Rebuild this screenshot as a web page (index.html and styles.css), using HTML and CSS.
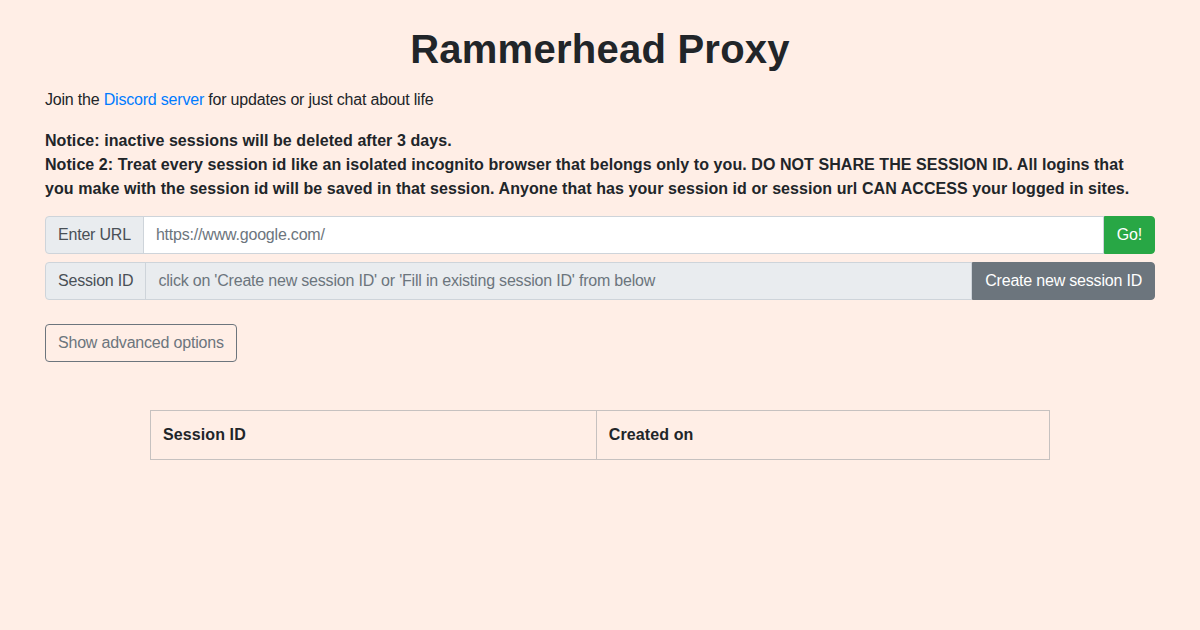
FILE: index.html
```html
<!DOCTYPE html>
<html lang="en">
<head>
<meta charset="utf-8">
<title>Rammerhead Proxy</title>
<link rel="stylesheet" href="styles.css">
</head>
<body>
<div class="container">
  <h1 class="title">Rammerhead Proxy</h1>
  <p class="join">Join the <a href="#">Discord server</a> for updates or just chat about life</p>
  <p class="notice">Notice: inactive sessions will be deleted after 3 days.<br>Notice 2: Treat every session id like an isolated incognito browser that belongs only to you. DO NOT SHARE THE SESSION ID. All logins that you make with the session id will be saved in that session. Anyone that has your session id or session url CAN ACCESS your logged in sites.</p>
  <div class="input-group">
    <span class="addon">Enter URL</span>
    <input class="field" type="text" placeholder="https://www.google.com/">
    <button class="btn btn-go">Go!</button>
  </div>
  <div class="input-group">
    <span class="addon">Session ID</span>
    <input class="field field-disabled" type="text" placeholder="click on 'Create new session ID' or 'Fill in existing session ID' from below" disabled>
    <button class="btn btn-gray">Create new session ID</button>
  </div>
  <div class="adv-row">
    <button class="btn btn-outline">Show advanced options</button>
  </div>
  <table class="sessions">
    <thead>
      <tr><th>Session ID</th><th>Created on</th></tr>
    </thead>
  </table>
</div>
</body>
</html>
```

FILE: styles.css
```css
* { box-sizing: border-box; }
html, body { margin: 0; padding: 0; }
body {
  background: #ffeee6;
  color: #212529;
  font-family: "Liberation Sans", Arial, sans-serif;
  font-size: 16px;
  line-height: 1.5;
  letter-spacing: -0.2px;
}
.container {
  width: 1140px;
  margin: 0 auto;
  padding: 25px 15px 0;
}
.title {
  margin: 0 0 15px;
  font-size: 40px;
  font-weight: 700;
  line-height: 1.2;
  text-align: center;
  letter-spacing: 0.25px;
}
.join { margin: 0 0 17px; }
.join a { color: #007bff; text-decoration: none; }
.notice { margin: 0 0 15px; font-weight: 700; letter-spacing: 0.07px; }
.input-group {
  display: flex;
  height: 38px;
  margin-bottom: 8px;
}
.addon {
  display: flex;
  align-items: center;
  padding: 0 12px;
  background: #e9ecef;
  border: 1px solid #ced4da;
  border-radius: 4px 0 0 4px;
  color: #495057;
  white-space: nowrap;
}
.field {
  flex: 1;
  min-width: 0;
  margin: 0 0 0 -1px;
  padding: 0 12px;
  border: 1px solid #ced4da;
  background: #fff;
  font: inherit;
  letter-spacing: inherit;
  color: #495057;
  outline: none;
}
.field::placeholder { color: #6c757d; opacity: 1; }
.field-disabled { background: #e9ecef; }
.btn {
  font: inherit;
  letter-spacing: inherit;
  padding: 0 12px;
  border: 1px solid transparent;
  cursor: pointer;
  white-space: nowrap;
}
.btn-go {
  background: #28a745;
  border-color: #28a745;
  color: #fff;
  border-radius: 0 4px 4px 0;
}
.btn-gray {
  background: #6c757d;
  border-color: #6c757d;
  color: #fff;
  border-radius: 0 4px 4px 0;
}
.adv-row { padding-top: 16px; margin-bottom: 48px; }
.btn-outline {
  height: 38px;
  background: transparent;
  border-color: #6c757d;
  color: #6c757d;
  border-radius: 4px;
}
.sessions {
  width: 900px;
  margin: 0 auto;
  border-collapse: collapse;
}
.sessions th {
  text-align: left;
  font-weight: 700;
  padding: 12px;
  border: 1px solid #c6c1c0;
  line-height: 24px;
  letter-spacing: 0.1px;
}
```
